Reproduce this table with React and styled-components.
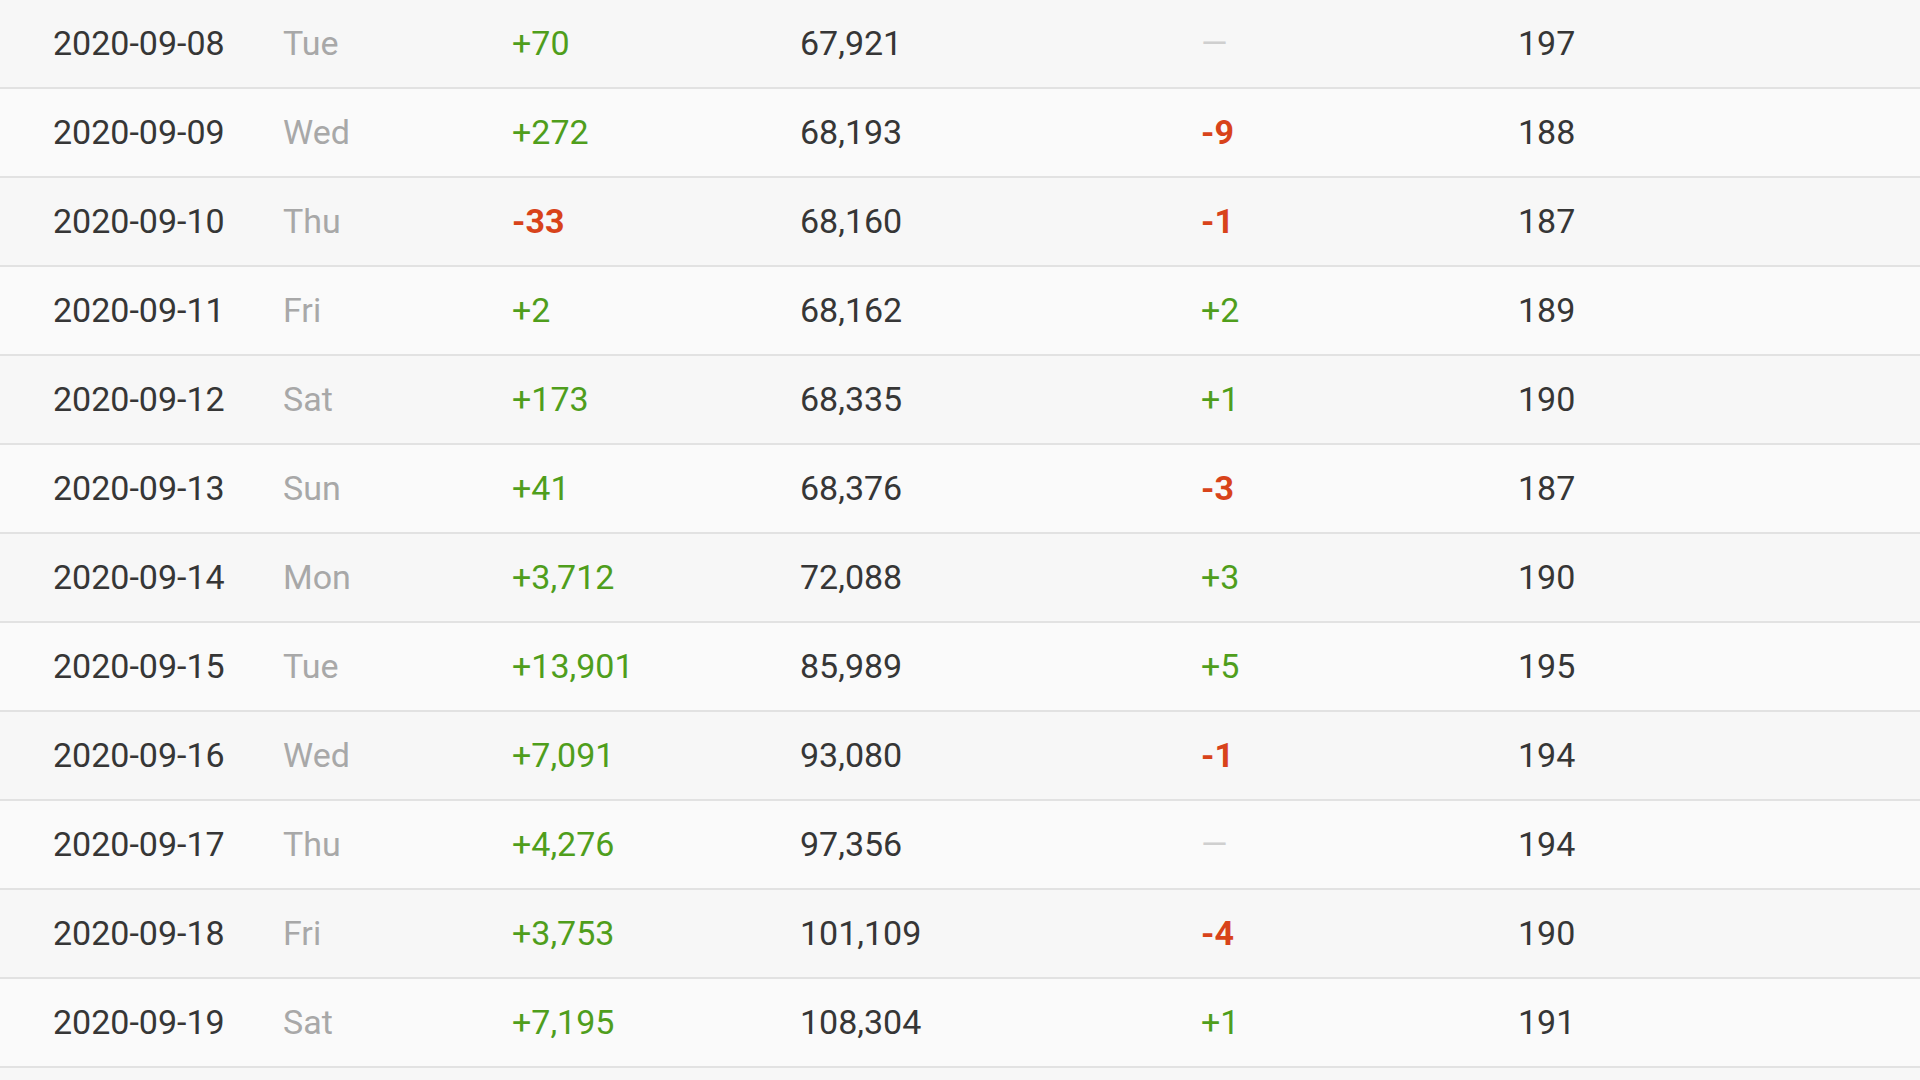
import React from 'react';
import styled, { createGlobalStyle } from 'styled-components';

const rows = [
  ['2020-09-08', 'Tue', 70, 67921, null, 197],
  ['2020-09-09', 'Wed', 272, 68193, -9, 188],
  ['2020-09-10', 'Thu', -33, 68160, -1, 187],
  ['2020-09-11', 'Fri', 2, 68162, 2, 189],
  ['2020-09-12', 'Sat', 173, 68335, 1, 190],
  ['2020-09-13', 'Sun', 41, 68376, -3, 187],
  ['2020-09-14', 'Mon', 3712, 72088, 3, 190],
  ['2020-09-15', 'Tue', 13901, 85989, 5, 195],
  ['2020-09-16', 'Wed', 7091, 93080, -1, 194],
  ['2020-09-17', 'Thu', 4276, 97356, null, 194],
  ['2020-09-18', 'Fri', 3753, 101109, -4, 190],
  ['2020-09-19', 'Sat', 7195, 108304, 1, 191],
];

const GlobalStyle = createGlobalStyle`
  html, body {
    margin: 0;
    padding: 0;
    background: #f7f7f7;
    overflow: hidden;
  }
  body {
    font-family: Roboto, "Liberation Sans", sans-serif;
  }
`;

const Table = styled.div`
  width: 1920px;
  display: flex;
  flex-direction: column;
`;

const Row = styled.div`
  display: grid;
  grid-template-columns: 230px 229px 288px 401px 317px 1fr;
  align-items: center;
  height: 87px;
  box-sizing: border-box;
  padding: 0 0 2px 53px;
  background: ${p => (p.$even ? '#fafafa' : '#f7f7f7')};
  border-bottom: 2px solid #e2e2e2;
  font-size: 34px;
  color: #363636;
  box-sizing: content-box;
  height: 85px;
`;

const Cell = styled.div`
  white-space: nowrap;
  color: ${p => (p.$muted ? '#a8a8a8' : '#363636')};
`;

const Delta = styled.div`
  white-space: nowrap;
  color: ${p => (p.$neg ? '#d8431a' : p.$none ? '#cfcfcf' : '#4f9e1c')};
  font-weight: ${p => (p.$neg ? 700 : 400)};
`;

const fmt = n => n.toLocaleString('en-US');
const signed = n => (n > 0 ? '+' : '') + fmt(n);

const App = () => (
  <>
    <GlobalStyle />
    <Table>
      {rows.map(([date, day, diff, total, change, last], i) => (
        <Row key={date} $even={i % 2 === 1}>
          <Cell>{date}</Cell>
          <Cell $muted>{day}</Cell>
          <Delta $neg={diff < 0}>{signed(diff)}</Delta>
          <Cell>{fmt(total)}</Cell>
          {change === null
            ? <Delta $none>—</Delta>
            : <Delta $neg={change < 0}>{signed(change)}</Delta>}
          <Cell>{last}</Cell>
        </Row>
      ))}
    </Table>
  </>
);

export default App;
